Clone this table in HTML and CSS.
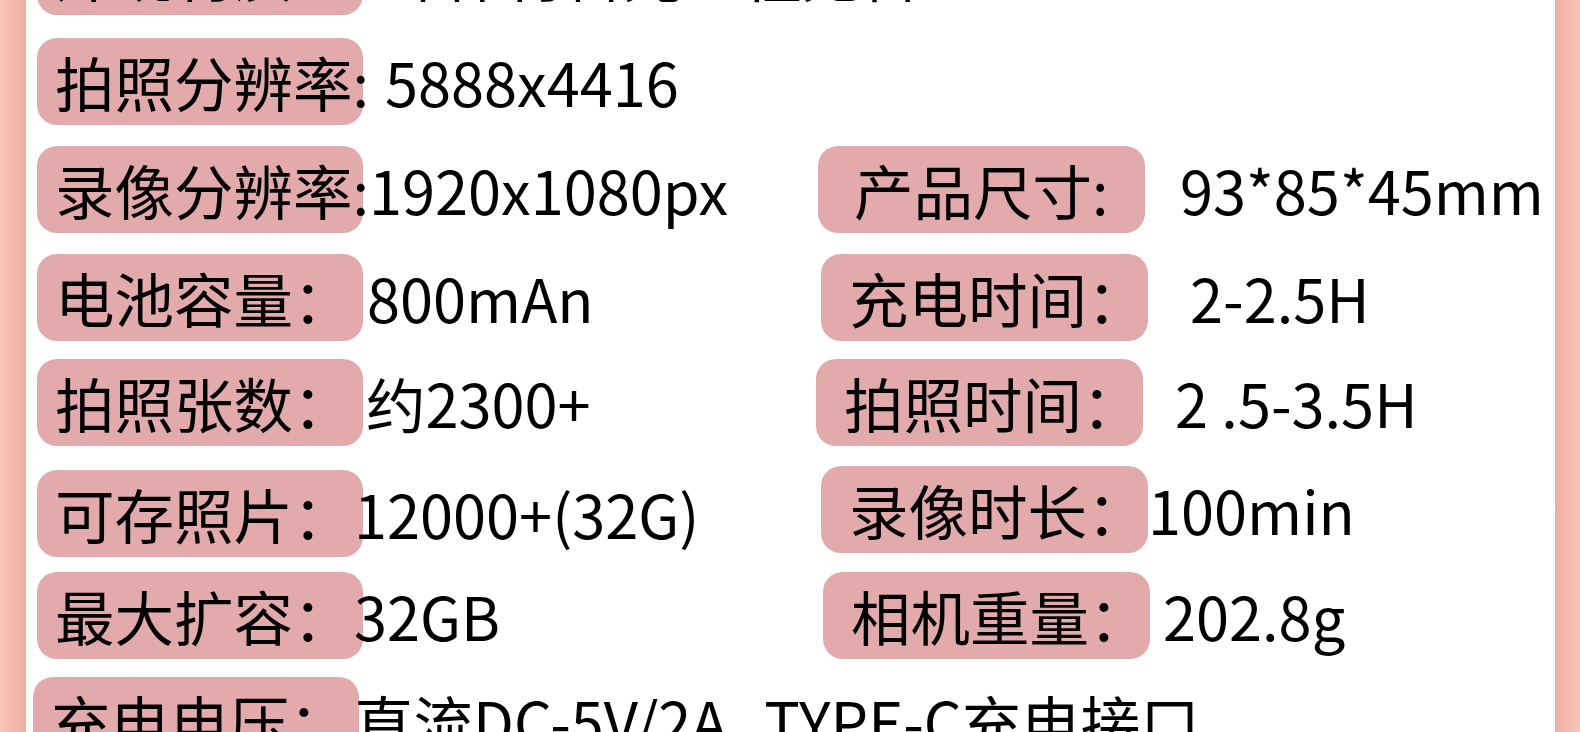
FILE: index.html
```html
<!DOCTYPE html>
<html lang="zh-CN">
<head>
<meta charset="utf-8">
<title>产品参数</title>
<link rel="stylesheet" href="styles.css">
</head>
<body>
<div class="page">
  <div class="strip strip-left"></div>
  <main class="sheet">
    <div class="specs">
      <div class="cell cell-wide">
        <span class="label">外观材质：</span>
        <span class="value m22">环保材料光工程无害</span>
      </div>

      <div class="cell cell-wide">
        <span class="label">拍照分辨率:</span>
        <span class="value m22">5888x4416</span>
      </div>

      <div class="cell">
        <span class="label">录像分辨率:</span>
        <span class="value m6">1920x1080px</span>
      </div>
      <div class="cell right nudge-n1">
        <span class="label pad-wide">产品尺寸:</span>
        <span class="value m35">93*85*45mm</span>
      </div>

      <div class="cell">
        <span class="label">电池容量：</span>
        <span class="value m4">800mAn</span>
      </div>
      <div class="cell right nudge-2">
        <span class="label">充电时间：</span>
        <span class="value m42">2-2.5H</span>
      </div>

      <div class="cell">
        <span class="label">拍照张数：</span>
        <span class="value m3">约2300+</span>
      </div>
      <div class="cell right nudge-n3">
        <span class="label">拍照时间：</span>
        <span class="value m32">2 .5-3.5H</span>
      </div>

      <div class="cell">
        <span class="label">可存照片：</span>
        <span class="value mn9">12000+(32G)</span>
      </div>
      <div class="cell right nudge-2 lift">
        <span class="label">录像时长：</span>
        <span class="value m0">100min</span>
      </div>

      <div class="cell">
        <span class="label">最大扩容：</span>
        <span class="value mn9">32GB</span>
      </div>
      <div class="cell right nudge-4">
        <span class="label">相机重量：</span>
        <span class="value m13">202.8g</span>
      </div>

      <div class="cell cell-wide shift-left">
        <span class="label">充电电压：</span>
        <span class="value mn5 spaced">直流DC-5V/2A&nbsp;&nbsp;TYPE-C充电接口</span>
      </div>
    </div>
  </main>
  <div class="strip strip-right"></div>
</div>
</body>
</html>
```

FILE: styles.css
```css
* {
  box-sizing: border-box;
}

html, body {
  margin: 0;
  padding: 0;
  background: #ffffff;
}

.page {
  display: flex;
  width: 1580px;
  height: 732px;
  overflow: hidden;
  font-family: "Noto Sans CJK SC", "Noto Sans", sans-serif;
  color: #000000;
}

.strip {
  flex: 0 0 auto;
  height: 100%;
}

.strip-left {
  width: 26px;
  background: linear-gradient(to right, #fbc4b3, #eeaea3);
}

.strip-right {
  width: 25px;
  background: linear-gradient(to right, #eeafa4, #fac4b4);
}

.sheet {
  flex: 1 1 auto;
  background: #ffffff;
  padding-left: 11px;
  overflow: hidden;
}

.specs {
  display: grid;
  grid-template-columns: 782px 1fr;
  grid-template-rows: 110px 108px 108px 105px 111px 102px 105px 87px;
  margin-top: -72px;
}

.cell {
  display: flex;
  align-items: center;
  align-self: start;
  height: 87px;
  white-space: nowrap;
  font-size: 59.5px;
  line-height: 87px;
}

.cell-wide {
  grid-column: 1 / -1;
}

.label {
  flex: 0 0 auto;
  width: 326px;
  height: 87px;
  padding-left: 18px;
  border-radius: 20px;
  background: #e3aaab;
}

.right .label {
  width: 327px;
  padding-left: 28px;
}

.right .label.pad-wide {
  padding-left: 36px;
}

.shift-left {
  margin-left: -4px;
}

.lift {
  margin-top: -4px;
}

.nudge-n1 { margin-left: -1px; }
.nudge-n3 { margin-left: -3px; }
.nudge-2 { margin-left: 2px; }
.nudge-4 { margin-left: 4px; }

.value {
  flex: 0 0 auto;
}

.spaced {
  word-spacing: 5px;
}

.m0 { margin-left: 0; }
.m3 { margin-left: 3px; }
.m4 { margin-left: 4px; }
.m6 { margin-left: 6px; }
.m13 { margin-left: 13px; }
.m22 { margin-left: 22px; }
.m32 { margin-left: 32px; }
.m35 { margin-left: 35px; }
.m42 { margin-left: 42px; }
.mn5 { margin-left: -5px; }
.mn9 { margin-left: -9px; }
```
